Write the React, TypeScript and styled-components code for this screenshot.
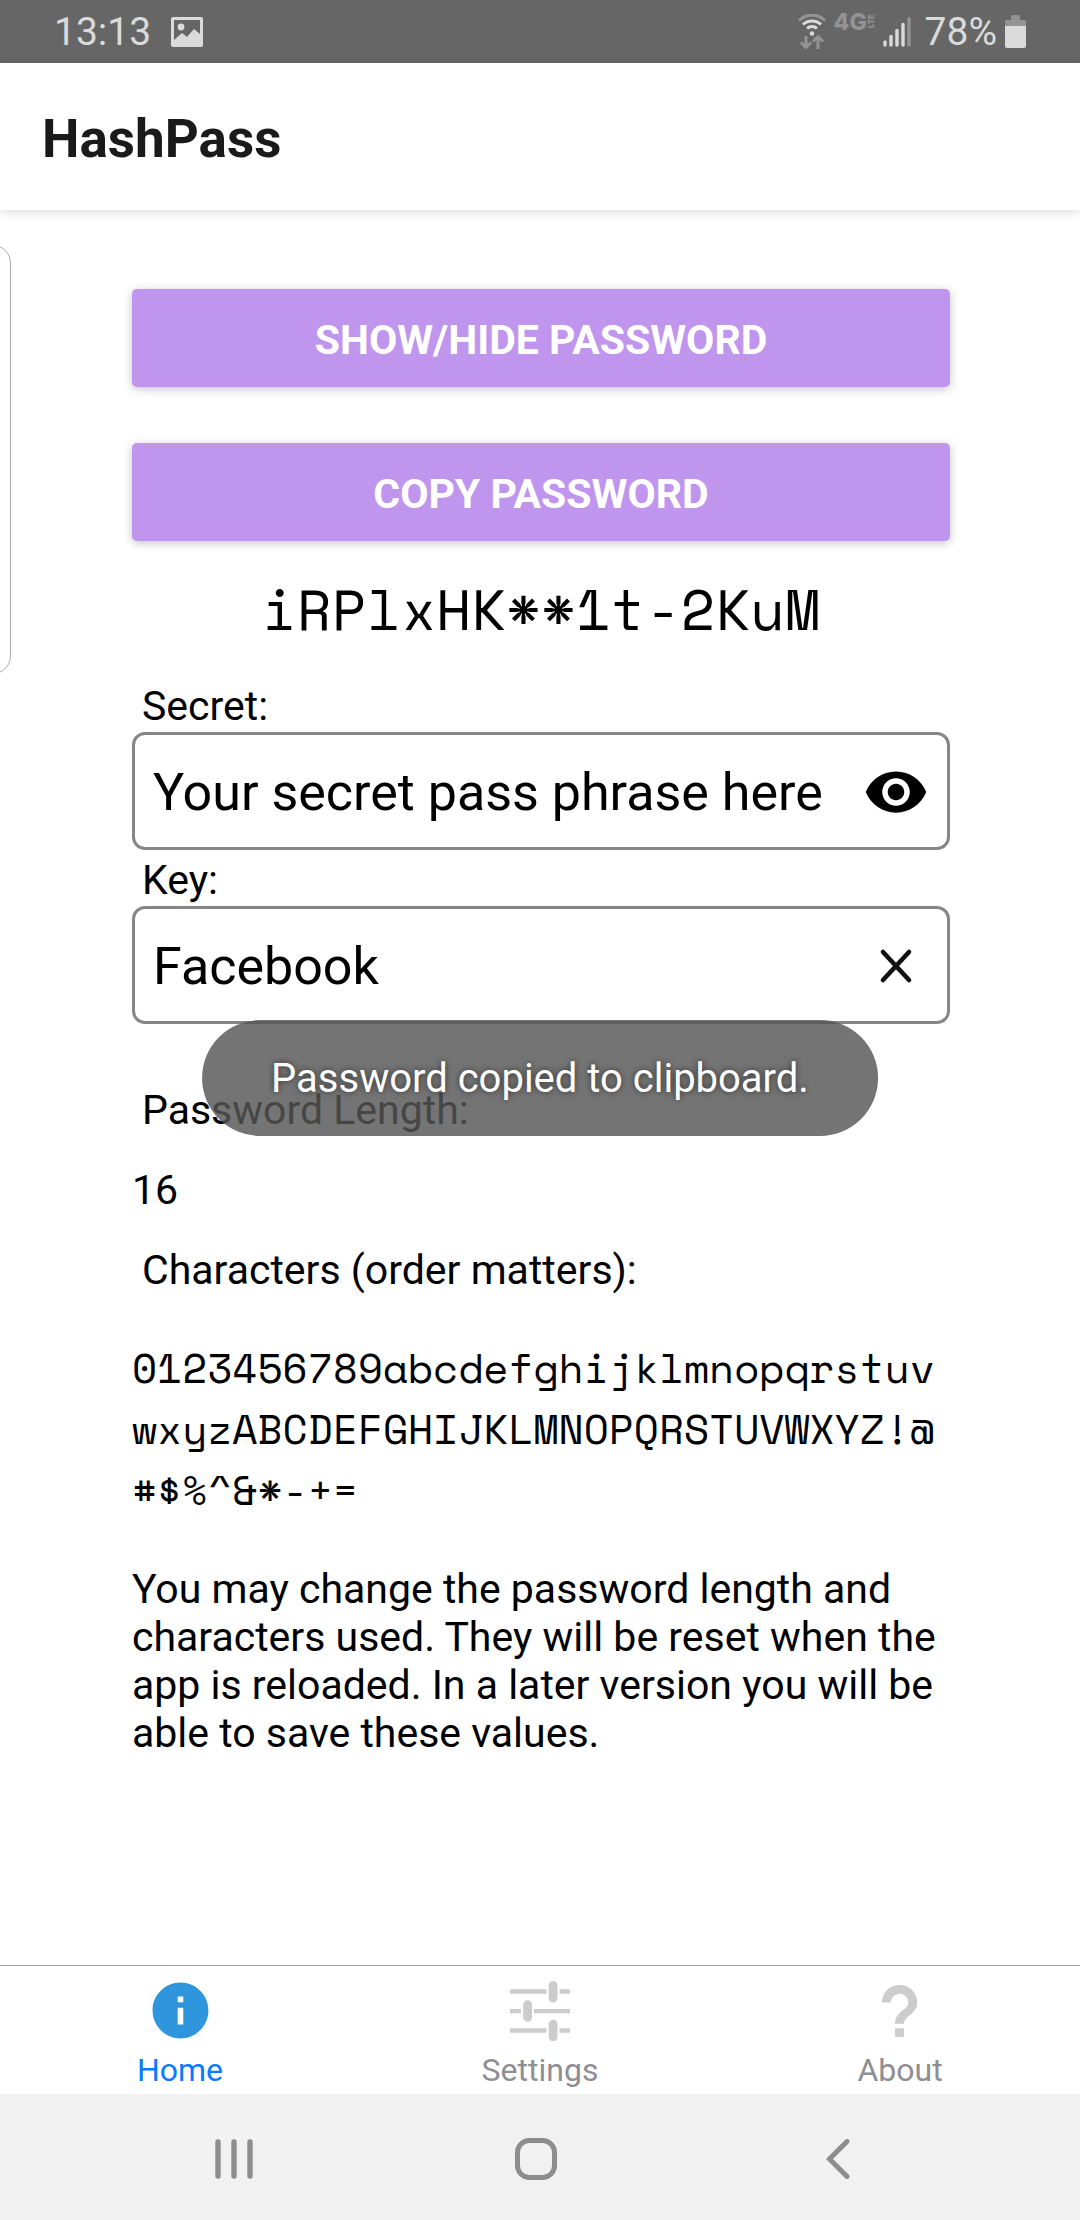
import React, { useState } from "react";
import styled, { createGlobalStyle } from "styled-components";
import { MdInfo, MdVisibility } from "react-icons/md";

const sans = `Roboto, "Noto Sans", sans-serif`;
const mono = `"Space Mono", "Liberation Mono", monospace`;

const GlobalStyle = createGlobalStyle`
  *, *::before, *::after { box-sizing: border-box; }
  body { margin: 0; background: #fff; color: #000; font-family: ${sans}; }
  button, input, textarea { font: inherit; color: inherit; }
`;

const Screen = styled.div`
  position: relative;
  display: flex;
  flex-direction: column;
  min-height: 100vh;
  overflow: hidden;
`;

const StatusBar = styled.div`
  display: flex;
  align-items: center;
  justify-content: space-between;
  height: 63px;
  padding: 0 54px;
  background: #666;
  color: #dadada;
  font-size: 39px;
  line-height: 46px;
`;

const StatusGroup = styled.div<{ $gap: number }>`
  display: flex;
  align-items: center;
  gap: ${(p) => p.$gap}px;
`;

const Network = styled.span`
  display: flex;
  align-self: flex-start;
  align-items: center;
  width: 41px;
  padding-top: 3px;
  color: #939393;
  font-family: Inter, sans-serif;
  font-size: 23px;
  font-weight: 800;
  line-height: 20px;
`;

const Lte = styled.span`
  writing-mode: vertical-rl;
  transform: rotate(180deg);
  font-size: 8px;
  line-height: 9px;
`;

const Header = styled.header`
  display: flex;
  align-items: center;
  height: 147px;
  padding: 4px 42px 0;
  background: #fff;
  box-shadow: 0 2px 10px rgba(0, 0, 0, 0.15);
`;

const Title = styled.h1`
  margin: 0;
  color: #1a1a1a;
  font-size: 53px;
  font-weight: 700;
  line-height: 62px;
`;

const EdgeHandle = styled.div`
  position: absolute;
  top: 245px;
  left: -40px;
  width: 51px;
  height: 429px;
  border: 1px solid #ababab;
  border-radius: 18px;
`;

const Content = styled.main`
  flex: 1;
  display: flex;
  flex-direction: column;
  padding: 79px 130px 0 132px;
`;

const Actions = styled.div`
  display: flex;
  flex-direction: column;
  gap: 56px;
`;

const ActionButton = styled.button`
  height: 98px;
  padding: 4px 0 0;
  border: 0;
  border-radius: 5px;
  background: #c095ee;
  box-shadow: 0 2px 10px rgba(0, 0, 0, 0.24);
  color: #fff;
  font-size: 41px;
  font-weight: 700;
  text-transform: uppercase;
`;

const Password = styled.output`
  display: block;
  margin: 30px 0 29px;
  font-family: ${mono};
  font-size: 57px;
  line-height: 76px;
  text-align: center;
`;

const Label = styled.label<{ $roomy?: boolean }>`
  padding: 0 10px;
  font-size: 41px;
  line-height: 48px;
  margin: ${(p) => (p.$roomy ? "32px 0" : "6px 0 2px")};
`;

const Field = styled.div`
  display: flex;
  align-items: center;
  height: 118px;
  padding: 0 18px;
  border: 3px solid #868686;
  border-radius: 13px;
`;

const FieldInput = styled.input`
  flex: 1;
  min-width: 0;
  padding: 4px 0 0;
  border: 0;
  outline: 0;
  background: none;
  font-size: 52px;
  line-height: 62px;
`;

const IconButton = styled.button`
  display: flex;
  padding: 2px 0 0;
  border: 0;
  background: none;
`;

const Options = styled.section`
  display: flex;
  flex-direction: column;
  margin-top: 30px;
`;

const PlainInput = styled.input`
  height: 48px;
  padding: 0;
  border: 0;
  outline: 0;
  background: none;
  font-size: 41px;
  line-height: 48px;
`;

const CharacterBox = styled.textarea`
  height: 183px;
  margin: 11px 0 45px;
  padding: 0;
  border: 0;
  outline: 0;
  resize: none;
  overflow: hidden;
  background: none;
  font-family: ${mono};
  font-size: 41px;
  line-height: 61px;
  word-break: break-all;
`;

const Note = styled.p`
  margin: 0 0 40px;
  font-size: 41px;
  line-height: 48px;
`;

const Toast = styled.div`
  position: absolute;
  top: 1020px;
  left: 50%;
  transform: translateX(-50%);
  padding: 35px 69px 33px;
  border-radius: 58px;
  background: rgba(85, 85, 85, 0.82);
  color: #fff;
  font-size: 40px;
  line-height: 48px;
  white-space: nowrap;
  text-shadow: 0 0 6px rgba(0, 0, 0, 0.6);
`;

const TabBar = styled.nav`
  display: grid;
  grid-template-columns: repeat(3, 1fr);
  height: 129px;
  border-top: 1px solid #a3a3a6;
`;

const Tab = styled.a<{ $active?: boolean }>`
  display: flex;
  flex-direction: column;
  align-items: center;
  padding-top: 11px;
  color: ${(p) => (p.$active ? "#0a7aff" : "#8e8e93")};
  font-size: 32px;
  line-height: 38px;
  text-decoration: none;
`;

const TabIcon = styled.span<{ $active?: boolean }>`
  display: flex;
  align-items: center;
  justify-content: center;
  height: 67px;
  margin-bottom: 7px;
  color: ${(p) => (p.$active ? "#2f95dc" : "#ccc")};
`;

const SystemNav = styled.div`
  display: grid;
  grid-template-columns: repeat(3, 1fr);
  height: 126px;
  padding: 4px 91px 0 83px;
  background: #f1f1f1;
  color: #8d8d8d;
`;

const SystemButton = styled.button`
  display: flex;
  align-items: center;
  justify-content: center;
  padding: 0;
  border: 0;
  background: none;
`;

const PictureIcon = () => (
  <svg width="32" height="30" viewBox="0 0 32 30" fill="currentColor" aria-hidden="true">
    <path
      fillRule="evenodd"
      d="M2 0h28a2 2 0 0 1 2 2v26a2 2 0 0 1-2 2H2a2 2 0 0 1-2-2V2a2 2 0 0 1 2-2zm1 3v20l8-7 5 4 7-8 6 5V3z"
    />
    <circle cx="10" cy="10" r="3.4" />
  </svg>
);

const WifiIcon = () => (
  <svg width="28" height="36" viewBox="0 0 28 36" fill="none" aria-hidden="true">
    <path d="M1 6.5a19 19 0 0 1 26 0" stroke="#939393" strokeWidth="3" />
    <path d="M5 10.5a13 13 0 0 1 18 0M9 14.5a7.5 7.5 0 0 1 10 0" stroke="#dadada" strokeWidth="3" />
    <circle cx="14" cy="19.5" r="2.2" fill="#dadada" />
    <path d="M8 22v11M3 28.5l5 5 5-5M20 35V23M15 27.5l5-5 5 5" stroke="#939393" strokeWidth="3" />
  </svg>
);

const SignalIcon = () => (
  <svg width="34" height="30" viewBox="0 0 34 30" stroke="#dadada" strokeWidth="3.4" strokeLinecap="round" aria-hidden="true">
    <path d="M2 25v3M8 19.5V28M14 13.5V28M20 7.5V28" />
    <path d="M26 2v26" stroke="#939393" />
  </svg>
);

const BatteryIcon = () => (
  <svg width="21" height="33" viewBox="0 0 21 33" aria-hidden="true">
    <path d="M6 5V2q0-2 2-2h5q2 0 2 2v3h4q2 0 2 2v5H0V7q0-2 2-2z" fill="#939393" />
    <path d="M0 11h21v20q0 2-2 2H2q-2 0-2-2z" fill="#dadada" />
  </svg>
);

const ClearIcon = () => (
  <svg width="66" height="66" viewBox="0 0 66 66" fill="none" stroke="#111" strokeWidth="4.6" strokeLinecap="round" aria-hidden="true">
    <path d="M20 19l26 28M46 19L20 47" />
  </svg>
);

const OptionsIcon = () => (
  <svg width="60" height="60" viewBox="0 0 60 60" fill="currentColor" aria-hidden="true">
    <path d="M0 8.3h36.5v4.4H0zM49.5 8.3H60v4.4H49.5zM0 28h11v4.2H0zM24 28h36v4.2H24zM0 47.3h36.5v4.4H0zM49.5 47.3H60v4.4H49.5z" />
    <rect x="38.7" y="0" width="8.8" height="21.5" rx="4.4" />
    <rect x="13.2" y="19.3" width="8.8" height="21.5" rx="4.4" />
    <rect x="38.7" y="38.7" width="8.8" height="21.5" rx="4.4" />
  </svg>
);

const QuestionIcon = () => (
  <svg width="36" height="52" viewBox="0 0 36 52" fill="currentColor" aria-hidden="true">
    <path d="M0 17.5a17.6 17.6 0 0 1 35.2 0c0 5.4-2.6 8.6-6 11.5-4 3.3-7.2 5.5-7.2 9.7h-9c0-6.2 3-9.7 7-12.7 3.5-2.6 6.3-4.7 6.3-8.5a8.7 8.7 0 0 0-17.4 0z" />
    <path d="M13 43.3h9V52h-9z" />
  </svg>
);

const RecentsIcon = () => (
  <svg width="38" height="40" viewBox="0 0 38 40" stroke="currentColor" strokeWidth="5.4" strokeLinecap="round" aria-hidden="true">
    <path d="M3 3v34M19 3v34M35 3v34" />
  </svg>
);

const HomeIcon = () => (
  <svg width="42" height="42" viewBox="0 0 42 42" fill="none" stroke="currentColor" strokeWidth="5" aria-hidden="true">
    <rect x="2.5" y="2.5" width="37" height="37" rx="12" />
  </svg>
);

const BackIcon = () => (
  <svg width="24" height="40" viewBox="0 0 24 40" fill="none" stroke="currentColor" strokeWidth="5" strokeLinecap="round" aria-hidden="true">
    <path d="M21 2.5L3.5 20 21 37.5" />
  </svg>
);

export default function App() {
  const [secret, setSecret] = useState("Your secret pass phrase here");
  const [key, setKey] = useState("Facebook");
  const [length, setLength] = useState("16");
  const [characters, setCharacters] = useState(
    "0123456789abcdefghijklmnopqrstuvwxyzABCDEFGHIJKLMNOPQRSTUVWXYZ!@#$%^&*-+="
  );
  const [masked, setMasked] = useState(false);
  const [visible, setVisible] = useState(true);

  return (
    <Screen>
      <GlobalStyle />
      <StatusBar>
        <StatusGroup $gap={20}>
          <span>13:13</span>
          <PictureIcon />
        </StatusGroup>
        <StatusGroup $gap={8}>
          <WifiIcon />
          <Network>
            4G<Lte>LTE</Lte>
          </Network>
          <SignalIcon />
          <span>78%</span>
          <BatteryIcon />
        </StatusGroup>
      </StatusBar>

      <Header>
        <Title>HashPass</Title>
      </Header>

      <Content>
        <Actions>
          <ActionButton onClick={() => setVisible(!visible)}>Show/Hide Password</ActionButton>
          <ActionButton>Copy Password</ActionButton>
        </Actions>
        <Password>{visible ? "iRPlxHK**1t-2KuM" : "\u00a0"}</Password>

        <Label htmlFor="secret">Secret:</Label>
        <Field>
          <FieldInput
            id="secret"
            type={masked ? "password" : "text"}
            value={secret}
            onChange={(e) => setSecret(e.target.value)}
          />
          <IconButton aria-label="Show secret" onClick={() => setMasked(!masked)}>
            <MdVisibility size={66} />
          </IconButton>
        </Field>

        <Label htmlFor="key">Key:</Label>
        <Field>
          <FieldInput id="key" value={key} onChange={(e) => setKey(e.target.value)} />
          <IconButton aria-label="Clear key" onClick={() => setKey("")}>
            <ClearIcon />
          </IconButton>
        </Field>

        <Options>
          <Label htmlFor="length" $roomy>Password Length:</Label>
          <PlainInput id="length" value={length} onChange={(e) => setLength(e.target.value)} />
          <Label htmlFor="characters" $roomy>Characters (order matters):</Label>
          <CharacterBox
            id="characters"
            spellCheck={false}
            value={characters}
            onChange={(e) => setCharacters(e.target.value)}
          />
          <Note>
            You may change the password length and characters used. They will be reset when the app
            is reloaded. In a later version you will be able to save these values.
          </Note>
        </Options>
      </Content>

      <TabBar>
        <Tab href="#home" $active>
          <TabIcon $active><MdInfo size={67} /></TabIcon>
          Home
        </Tab>
        <Tab href="#settings">
          <TabIcon><OptionsIcon /></TabIcon>
          Settings
        </Tab>
        <Tab href="#about">
          <TabIcon><QuestionIcon /></TabIcon>
          About
        </Tab>
      </TabBar>

      <SystemNav>
        <SystemButton aria-label="Recent apps"><RecentsIcon /></SystemButton>
        <SystemButton aria-label="Home screen"><HomeIcon /></SystemButton>
        <SystemButton aria-label="Back"><BackIcon /></SystemButton>
      </SystemNav>

      <EdgeHandle />
      <Toast role="status">Password copied to clipboard.</Toast>
    </Screen>
  );
}
